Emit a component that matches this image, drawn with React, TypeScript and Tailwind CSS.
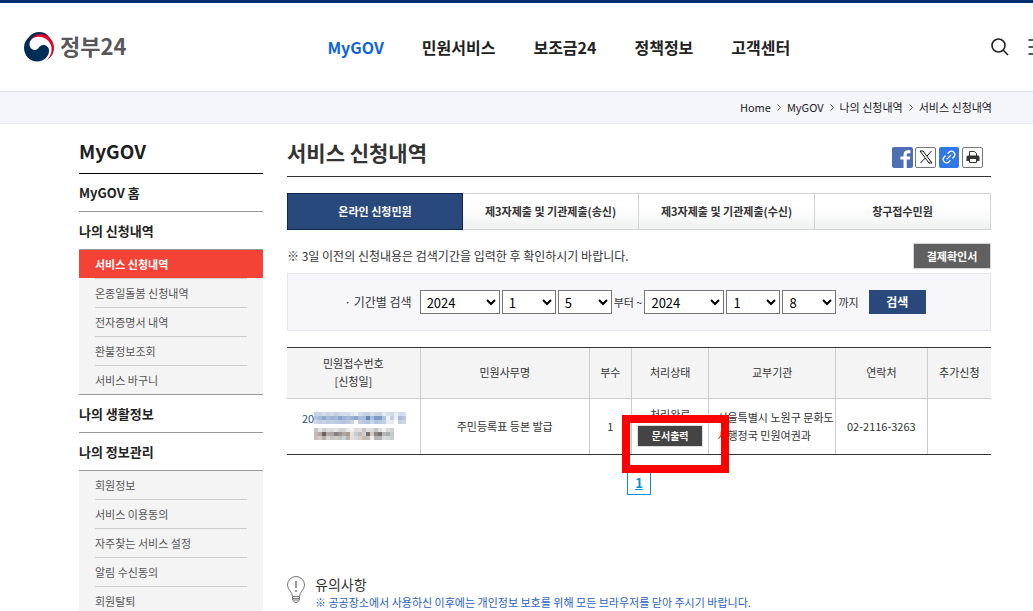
import { Link2, Menu } from 'lucide-react';

interface MenuGroup {
    title: string;
    items: string[];
}

const navItems = ['MyGOV', '민원서비스', '보조금24', '정책정보', '고객센터'];
const crumbs = ['Home', 'MyGOV', '나의 신청내역', '서비스 신청내역'];

const menuGroups: MenuGroup[] = [
    { title: 'MyGOV 홈', items: [] },
    { title: '나의 신청내역', items: ['서비스 신청내역', '온종일돌봄 신청내역', '전자증명서 내역', '환불정보조회', '서비스 바구니'] },
    { title: '나의 생활정보', items: [] },
    { title: '나의 정보관리', items: ['회원정보', '서비스 이용동의', '자주찾는 서비스 설정', '알림 수신동의', '회원탈퇴'] },
];

const tabs = ['온라인 신청민원', '제3자제출 및 기관제출(송신)', '제3자제출 및 기관제출(수신)', '창구접수민원'];

// mosaic tiles hiding the receipt number and the date
const numberTiles = [
    ['#c5d0e2', '#c9d4e6', '#d5dde9', '#c6d3e4', '#d2dbe9', '#c3cfe3', '#cfd9e8', '#d5dde9', '#d2dbe9', '#e0e6ef', '#eef1f6', '#d3dcea', '#c9d4e6', '#c5d0e2', '#d8e0ec', '#cad5e6', '#c5d3e6', '#e7ecf4', '#d9e1ec', '#cfd9e8', '#e8ecf4', '#d3dcea', '#d5deea'],
    ['#b3c4de', '#a4bbdb', '#8fa9cf', '#a9bdda', '#9cb2d4', '#a4b9d8', '#8aa5cd', '#9ab1d3', '#a9bdda', '#9fb4d5', '#8da8ce', '#a8bcda', '#a9bdda', '#6584b8', '#a9bdda', '#7d9ac7', '#7f9cc9', '#b3c3dc', '#eef5f7', '#c1cde1', '#edf1f7', '#a9b9d6', '#b9c7de'],
    ['#cdd7e7', '#c0cde2', '#c9d3e5', '#bdcce1', '#c5d1e4', '#bdcbe1', '#b9c8df', '#b4c4dd', '#bccae0', '#c7d2e5', '#fbfcfd', '#c1cee3', '#b9c8df', '#afc1db', '#c9d4e6', '#b4c5de', '#bccae0', '#c2cfe3', '#e8edf5', '#e5eaf3', '#ffffff', '#c5d1e4', '#c9d4e6'],
];
const dateTiles = [
    ['#c8c4c6', '#e4e4e6', '#d3cecc', '#dadde0', '#d9dbd9', '#e7e2dd', '#d1d5db', '#d8d3cf', '#e5e9ed', '#f5f3f1', '#dddbd9', '#e4e2df', '#c9c5c4', '#e2dfdd', '#d9dde0', '#c6c5c4', '#dddcdb', '#f0f0f0', '#d6dada', '#ced5d4'],
    ['#c3b9bb', '#b3a8a2', '#6f625e', '#b4aaa5', '#a5a6ab', '#8e817c', '#91949b', '#b7a699', '#a49c98', '#e9dfd3', '#c2d0dc', '#c9bab0', '#c8d2dc', '#7b706b', '#d6c9bc', '#83898c', '#77706d', '#b8b5b2', '#a9b0b2', '#c3cccb'],
    ['#c7bec1', '#d2cbc7', '#b6aeaa', '#d8d3d0', '#c9c5c3', '#d2cbc4', '#c4c2c1', '#c7d2d9', '#b9b1ab', '#e9e1d9', '#d3dbe0', '#d8cdc4', '#c4bbb4', '#c1bcb7', '#efefee', '#bbb4ae', '#b5b3b0', '#d8dcdd', '#d6d6d6', '#c6cfce'],
];

function Mosaic({ rows }: { rows: string[][] }) {
    const width = rows[0].length * 4;
    return (
        <svg width={width} height="12" viewBox={`0 0 ${width} 12`} shapeRendering="crispEdges" aria-hidden="true">
            {rows.map((row, y) =>
                row.map((color, x) => <rect key={`${x}-${y}`} x={x * 4} y={y * 4} width="4" height="4" fill={color} />)
            )}
        </svg>
    );
}

function GovLogo() {
    return (
        <a href="#" className="flex items-center gap-1.5">
            <svg width="30" height="30" viewBox="0 0 30 30" aria-hidden="true">
                <path d="M5 5C10-1.500 20-1.500 25 4.500L22 6C17 2 10 3 6.500 8.500C4 13 6.500 18 11 18C14.500 18 15 13 19.500 13C23 13 25.500 16 25 19.500C24.500 25.500 19 29.500 13 29.500C5 29.500 0 23 0 15.500C0 11.500 2 7.500 5 5Z" fill="#002c55" />
                <path d="M5.500 10C8 3 16 .5 22 3C27 5.500 30 10.500 30 16C30 21 27.500 25.500 22.500 28.500C26 25 28 20.500 27.500 15.500C26.500 8.500 20 4.500 14 4.800C10 5 7 7 5.500 10Z" fill="#e4002b" />
            </svg>
            <span className="pb-1 text-[22px] leading-7 font-bold text-[#58585a]">정부24</span>
        </a>
    );
}

function DateSelect({ label, value, wide }: { label: string; value: string; wide?: boolean }) {
    return (
        <select
            aria-label={label}
            defaultValue={value}
            className={`h-6 border border-[#767676] bg-white pl-0.5 text-[13px] leading-5 text-black ${wide ? 'w-20' : 'w-[54px]'}`}
        >
            <option>{value}</option>
        </select>
    );
}

function Sidebar() {
    return (
        <aside className="w-[184px] shrink-0">
            <h2 className="flex h-[50px] items-center border-b border-black pt-1.5 text-[19px] font-bold text-[#1d1d1d]">MyGOV</h2>
            {menuGroups.map((group) => (
                <div key={group.title}>
                    <h3 className="flex h-[38px] items-center border-b border-[#999] text-[13px] font-bold text-[#222]">
                        <a href="#">{group.title}</a>
                    </h3>
                    {group.items.length > 0 && (
                        <ul className="border-b border-[#999] bg-[#f4f4f4] text-[11px] text-[#555]">
                            {group.items.map((item, i) => (
                                <li key={item} className={item === '서비스 신청내역' ? 'bg-[linear-gradient(#f44336_28px,#f4f4f4_28px)] px-4 font-bold text-white' : 'px-4'}>
                                    <a
                                        href="#"
                                        className={`flex items-center ${i === group.items.length - 1 ? 'h-7' : 'h-[29px] border-b border-[#ccc]'}`}
                                    >
                                        {item}
                                    </a>
                                </li>
                            ))}
                        </ul>
                    )}
                </div>
            ))}
        </aside>
    );
}

function ShareButtons() {
    return (
        <div className="flex gap-0.5 pt-2">
            <button aria-label="페이스북" className="h-[21px] w-[21px] overflow-hidden rounded-xs bg-[#4f6fb3]">
                <svg width="21" height="21" viewBox="0 0 20 20">
                    <path d="M11 20v-8H8V9h3V7.200C11 4.500 12.500 3 15 3h2.500v3h-1.700C14.500 6 14 6.500 14 7.500V9h3.400l-.4 3h-3v8z" fill="#fff" />
                </svg>
            </button>
            <button aria-label="X" className="flex h-[21px] w-[21px] items-center justify-center rounded-xs border border-[#777] bg-white">
                <svg width="14" height="14" viewBox="0 0 14 14" fill="none" stroke="#111">
                    <path d="M1 1h3l9 12h-3zM12.500 1L8 6M6 8.200L1.500 13" />
                </svg>
            </button>
            <button aria-label="링크 복사" className="mx-px flex h-[21px] w-5 items-center justify-center rounded-xs bg-[#2f78e6] text-white">
                <Link2 className="h-4 w-4 -rotate-45" />
            </button>
            <button aria-label="인쇄" className="flex h-[21px] w-[21px] items-center justify-center rounded-xs border border-[#777] bg-white">
                <svg width="14" height="14" viewBox="0 0 14 14">
                    <path d="M3.500 6V1.500h5l2 2V6" fill="#fff" stroke="#333" />
                    <path d="M.5 7q0-1.500 1.500-1.500h10Q13.500 5.500 13.500 7v4H.5z" fill="#333" />
                    <path d="M3.500 8.500h7v4h-7z" fill="#fff" stroke="#333" />
                </svg>
            </button>
        </div>
    );
}

function ResultTable() {
    const cell = 'border-r border-[#ccc] last:border-r-0';
    return (
        <table className="mt-4 w-full table-fixed border-separate border-spacing-0 border-t border-b border-[#333] text-center text-[11px] leading-[18px] text-[#333]">
            <colgroup>
                <col className="w-[19%]" />
                <col className="w-[24%]" />
                <col className="w-[6%]" />
                <col className="w-[11%]" />
                <col className="w-[18%]" />
                <col className="w-[13%]" />
                <col className="w-[9%]" />
            </colgroup>
            <thead>
                <tr className="h-[51px] bg-[#f4f4f4]">
                    <th className={`${cell} border-b pb-0.5 font-normal`}>민원접수번호<br />[신청일]</th>
                    {['민원사무명', '부수', '처리상태', '교부기관', '연락처', '추가신청'].map((name) => (
                        <th key={name} className={`${cell} border-b pb-0.5 font-normal`}>{name}</th>
                    ))}
                </tr>
            </thead>
            <tbody>
                <tr className="h-[55px]">
                    <td className={`${cell} pt-0 pb-1`}>
                        <a href="#" className="flex items-center pl-[15px] text-[11px] leading-4 text-[#2a4f87]">
                            20
                            <Mosaic rows={numberTiles} />
                        </a>
                        <span className="mt-0.5 flex pl-[27px]"><Mosaic rows={dateTiles} /></span>
                    </td>
                    <td className={`${cell} pb-0.5`}>주민등록표 등본 발급</td>
                    <td className={`${cell} pb-0.5`}>1</td>
                    <td className={`${cell} relative pt-0 pb-0.5`}>
                        <div className="flex flex-col items-center gap-0.5">
                            처리완료
                            <button className="h-[22px] w-[66px] border border-[#ddd] bg-[#444] text-[10px] font-bold text-white">문서출력</button>
                        </div>
                        <div className="pointer-events-none absolute top-4 -left-2.5 h-[58px] w-[107px] border-8 border-[#f00]" />
                    </td>
                    <td className={`${cell} px-2 pb-0.5 text-left whitespace-nowrap`}>서울특별시 노원구 문화도<br />시행정국 민원여권과</td>
                    <td className={`${cell} pb-0.5`}>02-2116-3263</td>
                    <td className={cell} />
                </tr>
            </tbody>
        </table>
    );
}

export default function App() {
    return (
        <div className="h-screen overflow-hidden bg-white font-['Noto_Sans_CJK_KR','Noto_Sans_CJK_SC',sans-serif] text-[#333]">
            <header className="flex h-[92px] items-center border-t-[3px] border-b border-t-[#002f73] border-b-[#dde1e6] pl-6">
                <GovLogo />
                <nav className="ml-[201px] flex gap-[38px] text-[16px] font-bold text-[#222]">
                    {navItems.map((item) => (
                        <a key={item} href="#" className={item === 'MyGOV' ? 'text-[#0b64e0]' : ''}>{item}</a>
                    ))}
                </nav>
                <div className="-mr-4 ml-auto flex items-center gap-4 text-[#222]">
                    <button aria-label="검색">
                        <svg width="18" height="18" viewBox="0 0 18 18" fill="none" stroke="currentColor" strokeWidth="1.600">
                            <circle cx="7.500" cy="7.500" r="6.500" />
                            <path d="M12.300 12.300L17 17" />
                        </svg>
                    </button>
                    <button aria-label="전체메뉴"><Menu className="h-6 w-6" strokeWidth={1.5} /></button>
                </div>
            </header>

            <div className="flex h-8 items-center justify-end gap-1.5 border-b border-[#e4e4e8] bg-[#f5f6fb] pr-[41px] text-[11px] text-[#222]">
                {crumbs.map((crumb, i) => (
                    <span key={crumb} className="flex items-center gap-1.5">
                        {i > 0 && (
                            <svg width="4" height="7" viewBox="0 0 4 7" fill="none" stroke="#555" aria-hidden="true">
                                <path d="M.5.5l3 3-3 3" />
                            </svg>
                        )}
                        <a href="#">{crumb}</a>
                    </span>
                ))}
            </div>

            <div className="flex gap-6 pr-[42px] pl-[79px]">
                <Sidebar />
                <main className="min-w-0 flex-1">
                    <div className="flex h-[53px] items-center justify-between border-b border-[#333] pt-1.5 pr-2">
                        <h1 className="text-[21px] font-bold">서비스 신청내역</h1>
                        <ShareButtons />
                    </div>

                    <div className="mt-4 grid grid-cols-4 text-[11px] font-bold">
                        {tabs.map((tab, i) => (
                            <button
                                key={tab}
                                className={
                                    i === 0
                                        ? 'h-[37px] border border-[#0f2747] bg-[#29497d] text-white'
                                        : 'h-[37px] border border-l-0 border-[#d3d3d3] bg-linear-to-b from-white from-40% to-[#eff1f0]'
                                }
                            >
                                {tab}
                            </button>
                        ))}
                    </div>

                    <div className="flex items-center justify-between pt-[13px] pb-1">
                        <p className="text-xs">※ 3일 이전의 신청내용은 검색기간을 입력한 후 확인하시기 바랍니다.</p>
                        <button className="h-[26px] w-[78px] border border-[#d5d5d5] bg-[#606060] text-[11px] font-bold text-white">결제확인서</button>
                    </div>

                    <form className="flex h-[58px] items-center justify-center gap-0.5 border border-[#e5e5ec] bg-[#f7f7fb] pr-2 text-xs">
                        <span className="mr-1.5">· 기간별 검색</span>
                        <DateSelect label="시작 연도" value="2024" wide />
                        <DateSelect label="시작 월" value="1" />
                        <DateSelect label="시작 일" value="5" />
                        <span className="text-[11px]">부터 ~</span>
                        <DateSelect label="종료 연도" value="2024" wide />
                        <DateSelect label="종료 월" value="1" />
                        <DateSelect label="종료 일" value="8" />
                        <span className="text-[11px]">까지</span>
                        <button type="button" className="ml-2 h-6 w-[57px] bg-[#29497d] font-bold text-white">검색</button>
                    </form>

                    <ResultTable />

                    <div className="mt-4 flex justify-center">
                        <a href="#" className="flex h-6 w-6 items-center justify-center border border-[#0a8fe0] text-[13px] font-bold text-[#0a8fe0] underline">1</a>
                    </div>

                    <section className="mt-[79px] flex gap-2.5">
                        <svg width="18" height="28" viewBox="0 0 18 28" fill="none" stroke="#777" className="mt-0.5" aria-hidden="true">
                            <path d="M5.500 20.500C5.500 16 .5 14 .5 9a8.500 8.500 0 0 1 17 0c0 5-5 7-5 11.500zM5.500 20.500v3.500h7v-3.500M6 22.500h6M6.500 24.500q0 2 2.500 2t2.500-2" />
                            <path d="M9 5v7M9 14v2" strokeWidth="1.500" />
                        </svg>
                        <div>
                            <h4 className="text-sm leading-5">유의사항</h4>
                            <p className="text-[11px] leading-4 text-[#2a62c4]">※ 공공장소에서 사용하신 이후에는 개인정보 보호를 위해 모든 브라우저를 닫아 주시기 바랍니다.</p>
                        </div>
                    </section>
                </main>
            </div>
        </div>
    );
}
